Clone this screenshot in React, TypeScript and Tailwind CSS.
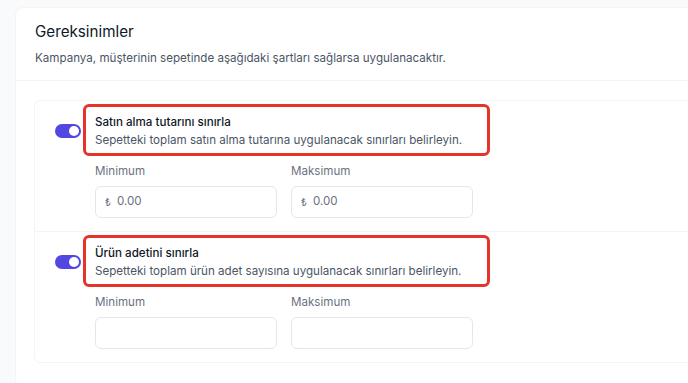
import React, { useState } from "react";

type Rule = {
  title: string;
  description: string;
  currency: boolean;
};

const rules: Rule[] = [
  {
    title: "Satın alma tutarını sınırla",
    description: "Sepetteki toplam satın alma tutarına uygulanacak sınırları belirleyin.",
    currency: true,
  },
  {
    title: "Ürün adetini sınırla",
    description: "Sepetteki toplam ürün adet sayısına uygulanacak sınırları belirleyin.",
    currency: false,
  },
];

const Toggle: React.FC<{ on: boolean; onChange: () => void }> = ({ on, onChange }) => (
  <button
    type="button"
    onClick={onChange}
    className={`mt-[20px] flex h-[14px] w-[26px] shrink-0 items-center rounded-full px-[2px] ${
      on ? "justify-end bg-[#5247e0]" : "justify-start bg-gray-300"
    }`}
  >
    <span className="h-[10px] w-[10px] rounded-full bg-white" />
  </button>
);

const Field: React.FC<{ label: string; currency: boolean }> = ({ label, currency }) => (
  <div className="w-[182px]">
    <label className="block text-[11.6px] leading-5 text-gray-500">{label}</label>
    <div className="mt-[5px] flex h-8 items-center rounded-md border border-gray-200 bg-white px-[9px]">
      {currency && <span className="mr-[6px] text-[10px] text-gray-500">₺</span>}
      <input
        className="w-full bg-transparent text-[11.6px] text-gray-700 outline-none placeholder:text-gray-500"
        placeholder={currency ? "0.00" : ""}
      />
    </div>
  </div>
);

const RuleRow: React.FC<{ rule: Rule; last: boolean }> = ({ rule, last }) => {
  const [on, setOn] = useState(true);
  return (
    <div className={`flex pl-5 pt-[3px] pb-[13px] ${last ? "" : "border-b border-gray-100"}`}>
      <Toggle on={on} onChange={() => setOn(!on)} />
      <div className="ml-[14px]">
        <div className="-ml-3 w-[407px] rounded-md border-[3px] border-[#e5342a] pl-[9px] pt-[6px] pb-[4px]">
          <div className="text-[11.6px] font-medium leading-[18px] text-gray-900">{rule.title}</div>
          <div className="text-[11.6px] leading-[18px] text-gray-600">{rule.description}</div>
        </div>
        <div className="mt-[5px] flex gap-[14px]">
          <Field label="Minimum" currency={rule.currency} />
          <Field label="Maksimum" currency={rule.currency} />
        </div>
      </div>
    </div>
  );
};

export default function App() {
  return (
    <div className="h-[383px] w-[688px] overflow-hidden bg-[#f9fafb] pl-[15px] pt-[7px] font-['Inter',sans-serif]">
      <div className="w-[720px] rounded-lg border border-gray-100 bg-white">
        <div className="border-b border-gray-100 pl-[19px] pt-3 pb-3">
          <h2 className="text-[15.2px] leading-6 text-gray-900">Gereksinimler</h2>
          <p className="mt-1 text-[11.6px] leading-5 text-gray-600">
            Kampanya, müşterinin sepetinde aşağıdaki şartları sağlarsa uygulanacaktır.
          </p>
        </div>
        <div className="pl-[18px] pt-[19px] pb-6">
          <div className="rounded-md border border-gray-100">
            {rules.map((r, i) => (
              <RuleRow key={r.title} rule={r} last={i === rules.length - 1} />
            ))}
          </div>
        </div>
      </div>
    </div>
  );
}
